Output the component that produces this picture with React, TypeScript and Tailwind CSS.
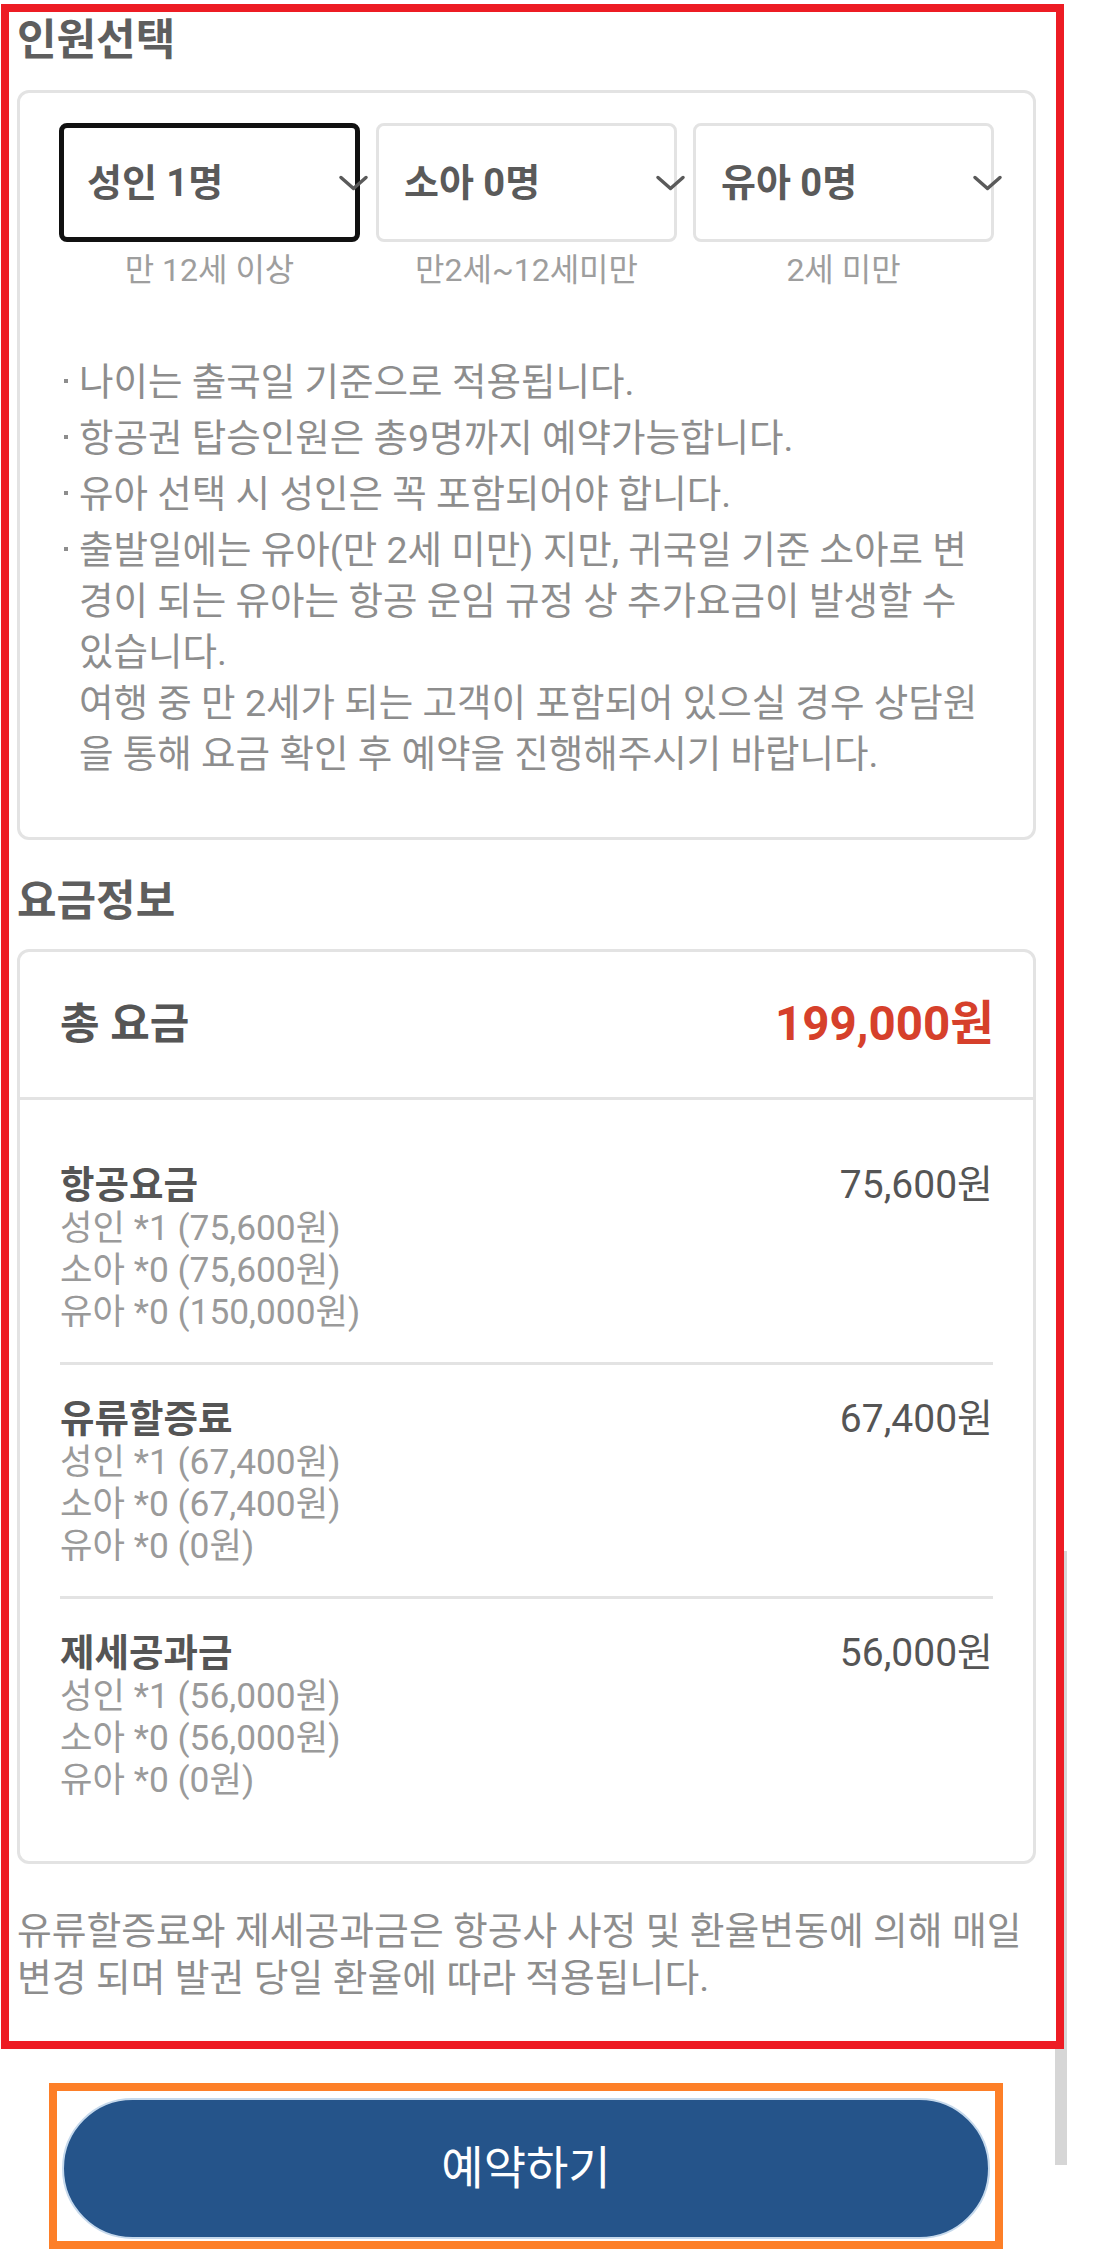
import clsx from "clsx";

const travellers = [
  { label: "성인 1명", note: "만 12세 이상", selected: true },
  { label: "소아 0명", note: "만2세~12세미만", selected: false },
  { label: "유아 0명", note: "2세 미만", selected: false },
];

const notes = [
  ["나이는 출국일 기준으로 적용됩니다."],
  ["항공권 탑승인원은 총9명까지 예약가능합니다."],
  ["유아 선택 시 성인은 꼭 포함되어야 합니다."],
  [
    "출발일에는 유아(만 2세 미만) 지만, 귀국일 기준 소아로 변",
    "경이 되는 유아는 항공 운임 규정 상 추가요금이 발생할 수",
    "있습니다.",
    "여행 중 만 2세가 되는 고객이 포함되어 있으실 경우 상담원",
    "을 통해 요금 확인 후 예약을 진행해주시기 바랍니다.",
  ],
];

const fares = [
  {
    title: "항공요금",
    total: "75,600원",
    lines: ["성인 *1 (75,600원)", "소아 *0 (75,600원)", "유아 *0 (150,000원)"],
  },
  {
    title: "유류할증료",
    total: "67,400원",
    lines: ["성인 *1 (67,400원)", "소아 *0 (67,400원)", "유아 *0 (0원)"],
  },
  {
    title: "제세공과금",
    total: "56,000원",
    lines: ["성인 *1 (56,000원)", "소아 *0 (56,000원)", "유아 *0 (0원)"],
  },
];

function Chevron({ className }: { className?: string }) {
  return (
    <svg
      className={className}
      width="31"
      height="17"
      viewBox="0 0 31 17"
      fill="none"
      stroke="#5a5a5a"
      strokeWidth="3.5"
      strokeLinecap="round"
      strokeLinejoin="round"
    >
      <polyline points="3,3 15.5,14 28,3" />
    </svg>
  );
}

export default function App() {
  return (
    <div className="relative min-h-[2251px] bg-white font-['Roboto','Noto_Sans_CJK_KR',sans-serif]">
      {/* scroll thumb peeking out beside the frame */}
      <div className="absolute left-[1055px] top-[1547px] h-[614px] w-[12px] bg-[#d6d6d6]" />

      <section className="relative z-10 ml-px mt-[4px] w-[1063px] border-[8px] border-[#ed1c24] bg-white pb-[39px] pl-[8px] pr-[20px]">
        <h2 className="pt-[4px] text-[43px] font-bold leading-[48px] text-[#5e5e5e]">
          인원선택
        </h2>

        <div className="mt-[26px] rounded-[12px] border-[3px] border-[#e3e3e3] px-[39px] pb-[57px] pt-[30px]">
          <div className="grid grid-cols-3 gap-[16px]">
            {travellers.map((t) => (
              <div key={t.label}>
                <div
                  className={clsx(
                    "relative flex h-[119px] items-center rounded-[8px]",
                    t.selected
                      ? "border-[5px] border-[#111111] pl-[23px]"
                      : "border-[3px] border-[#e3e3e3] pl-[25px]"
                  )}
                >
                  <span className="text-[38px] font-bold leading-none text-[#5a5a5a]">
                    {t.label}
                  </span>
                  <Chevron
                    className={clsx(
                      "absolute top-1/2 -translate-y-1/2",
                      t.selected ? "right-[-14px]" : "right-[-12px]"
                    )}
                  />
                </div>
                <p className="mt-[8px] text-center text-[32px] leading-[40px] text-[#9e9e9e]">
                  {t.note}
                </p>
              </div>
            ))}
          </div>

          <ul className="mt-[67px] space-y-[5px] pl-[5px] text-[37.5px] leading-[51px] text-[#8d8d8d]">
            {notes.map((lines) => (
              <li key={lines[0]} className="flex">
                <span className="w-[15px] shrink-0">
                  <span className="mt-[22px] block h-[4px] w-[4px] bg-[#8d8d8d]" />
                </span>
                <div>
                  {lines.map((line) => (
                    <div key={line} className="whitespace-nowrap">
                      {line}
                    </div>
                  ))}
                </div>
              </li>
            ))}
          </ul>
        </div>

        <h2 className="mt-[37px] text-[43px] font-bold leading-[48px] text-[#5e5e5e]">
          요금정보
        </h2>

        <div className="mt-[24px] rounded-[12px] border-[3px] border-[#e3e3e3]">
          <div className="flex h-[148px] items-center justify-between border-b-[3px] border-[#e3e3e3] pl-[40px] pr-[39px]">
            <span className="text-[43px] font-bold text-[#555555]">총 요금</span>
            <span className="text-[47.5px] font-bold text-[#d6402b]">199,000원</span>
          </div>

          <div className="px-[40px] pb-[31px] pt-[31px]">
            {fares.map((f, i) => (
              <div
                key={f.title}
                className={clsx(
                  "flex items-start justify-between pb-[29px] pt-[32px]",
                  i > 0 && "border-t-[3px] border-[#e3e3e3]"
                )}
              >
                <div>
                  <div className="text-[37.5px] font-bold leading-[44px] text-[#555555]">
                    {f.title}
                  </div>
                  {f.lines.map((line) => (
                    <div
                      key={line}
                      className="whitespace-nowrap text-[35.3px] leading-[42px] text-[#9a9a9a]"
                    >
                      {line}
                    </div>
                  ))}
                </div>
                <div className="text-[39px] leading-[44px] text-[#555555]">
                  {f.total}
                </div>
              </div>
            ))}
          </div>
        </div>

        <p className="mt-[44px] whitespace-nowrap text-[37.8px] leading-[47px] text-[#8d8d8d]">
          유류할증료와 제세공과금은 항공사 사정 및 환율변동에 의해 매일
          <br />
          변경 되며 발권 당일 환율에 따라 적용됩니다.
        </p>
      </section>

      <div className="ml-[49px] mt-[34px] h-[166px] w-[954px] border-[8px] border-[#fd7f28] px-[5px] pt-[7px]">
        <button className="h-[141px] w-full rounded-full border-2 border-[#c6d9ec] bg-[#25548a] text-[46px] text-white">
          예약하기
        </button>
      </div>
    </div>
  );
}
